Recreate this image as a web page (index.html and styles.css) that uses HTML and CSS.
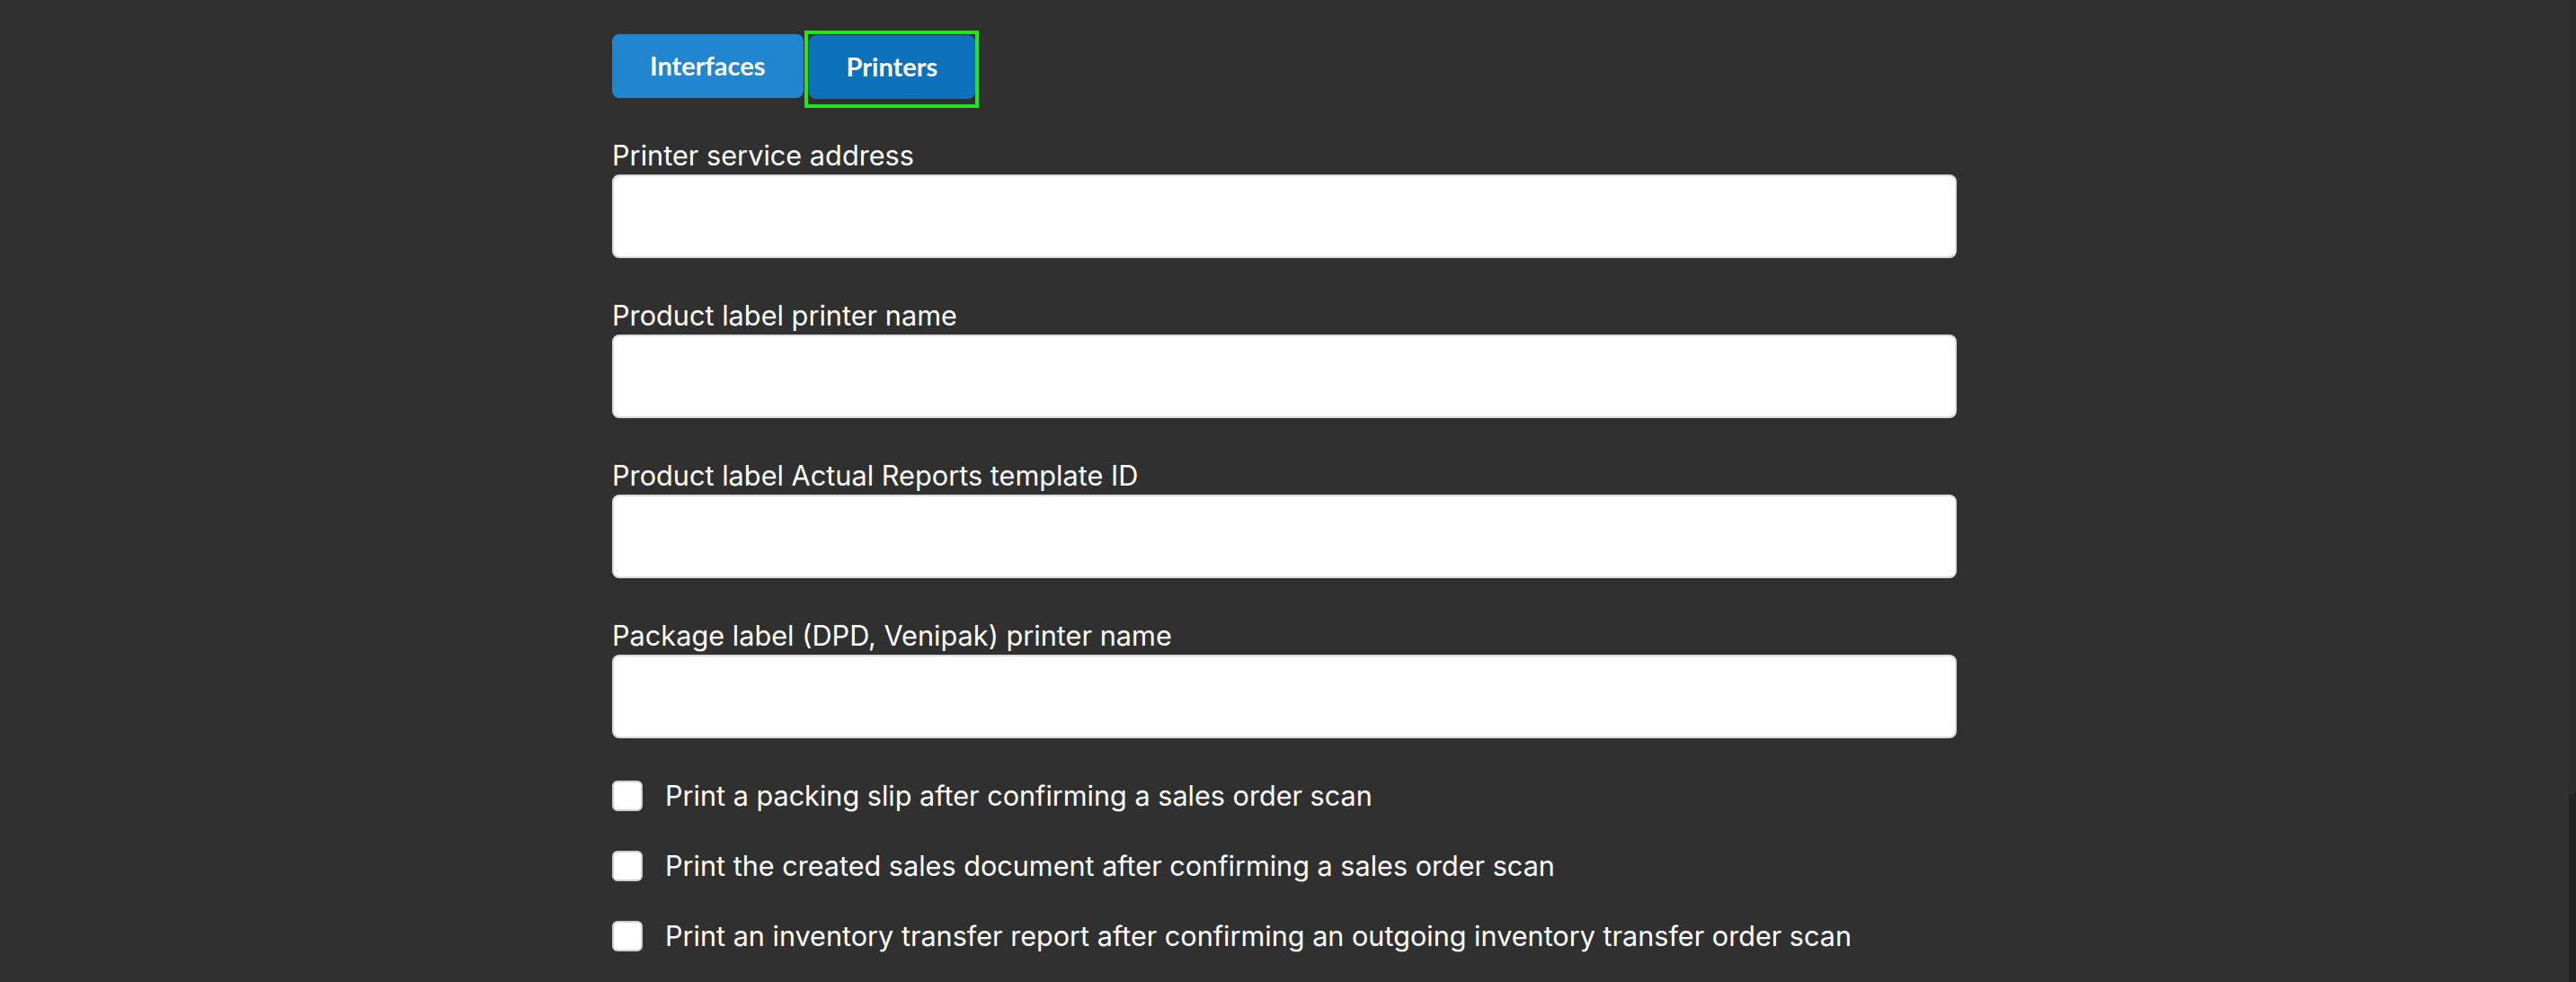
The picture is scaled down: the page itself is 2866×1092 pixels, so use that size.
FILE: index.html
```html
<!DOCTYPE html>
<html lang="en">
  <head>
    <meta charset="UTF-8" />
    <meta name="viewport" content="width=device-width, initial-scale=1.0" />
    <title>Printer settings</title>
    <link rel="stylesheet" href="styles.css">
  </head>

  <body>
    <div class="page">
      <main class="content">
        <div class="container">
          <!-- Settings tabs -->
          <div class="tabs">
            <button type="button" class="tab">Interfaces</button>
            <span class="tab-focus">
              <button type="button" class="tab tab-active">Printers</button>
            </span>
          </div>

          <!-- Printer settings form -->
          <form class="settings" id="printer-settings">
            <div class="field">
              <label for="service-address">Printer service address</label>
              <input type="text" id="service-address" name="service-address" />
            </div>

            <div class="field">
              <label for="product-printer">Product label printer name</label>
              <input type="text" id="product-printer" name="product-printer" />
            </div>

            <div class="field">
              <label for="product-template">Product label Actual Reports template ID</label>
              <input type="text" id="product-template" name="product-template" />
            </div>

            <div class="field">
              <label for="package-printer">Package label (DPD, Venipak) printer name</label>
              <input type="text" id="package-printer" name="package-printer" />
            </div>

            <div class="checks">
              <label class="check">
                <input type="checkbox" name="print-packing-slip" />
                <span>Print a packing slip after confirming a sales order scan</span>
              </label>
              <label class="check">
                <input type="checkbox" name="print-sales-document" />
                <span>Print the created sales document after confirming a sales order scan</span>
              </label>
              <label class="check">
                <input type="checkbox" name="print-transfer-report" />
                <span>Print an inventory transfer report after confirming an outgoing inventory transfer order scan</span>
              </label>
            </div>
          </form>
        </div>
      </main>

      <!-- Scroll track of the settings pane -->
      <div class="scrollbar">
        <div class="scrollbar-thumb"></div>
      </div>
    </div>
  </body>
</html>
```

FILE: styles.css
```css
/* Global Styles */
html,
body {
  margin: 0;
  padding: 0;
  height: 100%;
}

body {
  background: #303030;
  font-family: "Inter", "Noto Sans", sans-serif;
  color: #fff;
  overflow: hidden;
}

.page {
  display: flex;
  height: 100vh;
}

.content {
  flex: 1;
}

.container {
  width: 1496px;
  margin: 0 auto;
  padding-top: 38px;
}

/* Tabs */
.tabs {
  display: flex;
  align-items: flex-start;
  gap: 5px;
}

.tab {
  height: 71px;
  padding: 0 42px 3px;
  border: none;
  border-radius: 8px;
  background: #2185d0;
  color: #fff;
  font-family: "Lato", sans-serif;
  font-weight: bold;
  font-size: 29px;
  line-height: 1;
  cursor: pointer;
}

.tab-active {
  background: #0d71bb;
}

.tab-focus {
  display: block;
  padding: 1px 0 6px 1px;
  outline: 4px solid #1ee81e;
}

.tab-focus .tab {
  display: block;
}

/* Form */
.settings {
  display: flex;
  flex-direction: column;
  gap: 46px;
  margin-top: 39px;
}

.field {
  display: flex;
  flex-direction: column;
}

.field label {
  font-size: 30.7px;
  line-height: 36px;
  margin-bottom: 3px;
}

.field input {
  height: 93px;
  padding: 0 20px;
  border: 2px solid #dcdcdc;
  border-radius: 8px;
  background: #fff;
  font-size: 28px;
  box-sizing: border-box;
}

.checks {
  display: flex;
  flex-direction: column;
  gap: 42px;
}

.check {
  display: flex;
  align-items: center;
  gap: 25px;
  font-size: 30.6px;
  line-height: 36px;
  cursor: pointer;
}

.check input {
  appearance: none;
  width: 34px;
  height: 34px;
  margin: 0;
  border: 2px solid #cfcfcf;
  border-radius: 6px;
  background: #fff;
  flex-shrink: 0;
}

/* Scrollbar */
.scrollbar {
  width: 8px;
  background: #2c2c2c;
  display: flex;
  flex-direction: column;
  justify-content: flex-end;
}

.scrollbar-thumb {
  height: 210px;
  background: #222;
  border-top-left-radius: 6px;
}
```
